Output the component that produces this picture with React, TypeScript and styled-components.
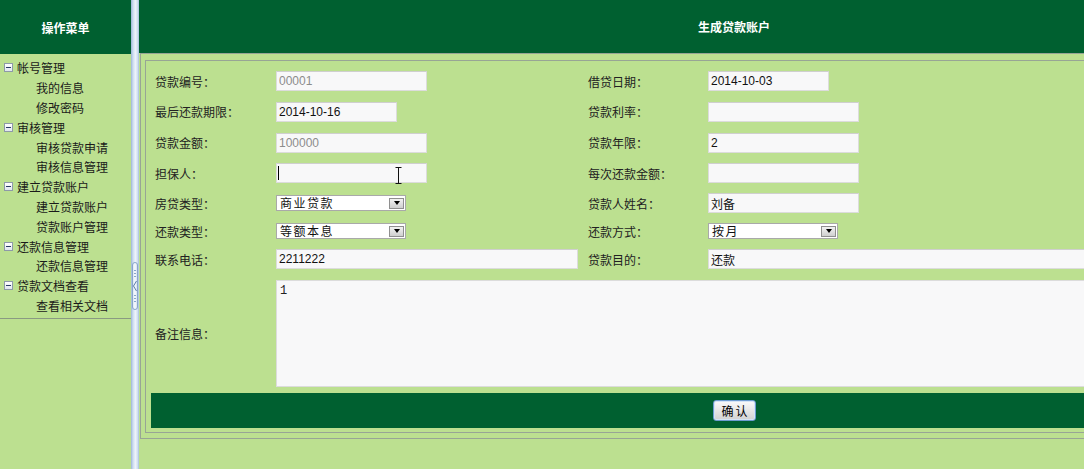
import React from "react";
import styled, { createGlobalStyle } from "styled-components";

const DARK = "#006030";
const LIGHT = "#bce090";

const GlobalStyle = createGlobalStyle`
  html, body {
    margin: 0;
    padding: 0;
    overflow: hidden;
    background: ${LIGHT};
  }
  body {
    font-family: "Noto Sans CJK SC", "Liberation Sans", sans-serif;
    font-size: 12px;
    color: #1e1e1e;
  }
`;

const Page = styled.div`
  display: flex;
  height: 100vh;
  width: max-content;
`;

const Sidebar = styled.div`
  width: 131px;
  flex-shrink: 0;
  display: flex;
  flex-direction: column;
`;

const SideHeader = styled.div`
  height: 54px;
  background: ${DARK};
  color: #fff;
  font-weight: bold;
  display: flex;
  align-items: center;
  justify-content: center;
`;

const Menu = styled.div`
  padding: 4px 0 3px;
  border-bottom: 1px solid #8a9a82;
`;

const MenuGroup = styled.div`
  height: 19.8px;
  display: flex;
  align-items: center;
  gap: 4px;
  padding-left: 4px;
  color: #1a1a1a;
`;

const MenuItem = styled.div`
  height: 19.8px;
  display: flex;
  align-items: center;
  padding-left: 36px;
  color: #1a1a1a;
`;

const ToggleBox = styled.span`
  width: 7px;
  height: 7px;
  border: 1px solid #8e9aa8;
  background: linear-gradient(#ffffff, #dfe6ee);
  display: flex;
  align-items: center;
  justify-content: center;

  &::after {
    content: "";
    width: 5px;
    height: 1px;
    background: #2c3e66;
  }
`;

const Splitter = styled.div`
  width: 8px;
  flex-shrink: 0;
  background: linear-gradient(
    to right,
    #9db6d6,
    #cddcf0 25%,
    #eef4fb 55%,
    #d3e1f2 80%,
    #a7bedc
  );
  display: flex;
  flex-direction: column;
  align-items: center;
  padding-top: 262px;
  box-sizing: border-box;
`;

const Handle = styled.div`
  width: 6px;
  height: 48px;
  box-sizing: border-box;
  border: 1px solid #8aa6ca;
  border-radius: 3px;
  background: linear-gradient(to right, #dbe6f4, #f8fbff, #d5e2f2);
  display: flex;
  align-items: center;
  justify-content: center;
`;

const Main = styled.div`
  width: 1190px;
  flex-shrink: 0;
  display: flex;
  flex-direction: column;
`;

const MainHeader = styled.div`
  height: 53px;
  background: ${DARK};
  color: #fff;
  font-weight: bold;
  display: flex;
  align-items: center;
  justify-content: center;
`;

const OuterBox = styled.div`
  margin-left: 1px;
  border: 1px solid #98a595;
  padding: 6px 4px 5px 4px;
`;

const InnerBox = styled.div`
  border: 1px solid #98a595;
  padding: 5px 5px 4px 5px;
`;

const Form = styled.div`
  display: grid;
  grid-template-columns: 125px 312px 120px 1fr;
  grid-template-rows: 30px 31px 31px 30px 30px 26px 30px 119px;
  align-items: center;
`;

const Label = styled.div<{ $indent?: boolean }>`
  padding-left: ${(p) => (p.$indent ? "4px" : "0")};
  color: #222;
  white-space: nowrap;
`;

const Field = styled.div<{ $span?: number }>`
  position: relative;
  display: flex;
  align-items: center;
  grid-column: ${(p) => (p.$span ? `span ${p.$span}` : "auto")};
`;

const TextInput = styled.input<{ $w: string; $muted?: boolean }>`
  width: ${(p) => p.$w};
  height: 20px;
  box-sizing: border-box;
  border: 1px solid #dcdcdc;
  border-top-color: #cfcfcf;
  background: #f8f8f9;
  padding: 0 2px;
  font-family: "Liberation Sans", "Noto Sans CJK SC", sans-serif;
  font-size: 12px;
  color: ${(p) => (p.$muted ? "#8c8c8c" : "#111")};
  outline: none;
`;

const CnInput = styled(TextInput)`
  font-family: "Noto Sans CJK SC", "Liberation Sans", sans-serif;
`;

const Caret = styled.span`
  position: absolute;
  left: 2px;
  top: 3px;
  width: 1px;
  height: 14px;
  background: #000;
`;

const IBeam = styled.svg`
  position: absolute;
  left: 119px;
  top: 4px;
`;

const SelectBox = styled.div<{ $w: string }>`
  width: ${(p) => p.$w};
  height: 16px;
  box-sizing: border-box;
  border: 1px solid #a9a9a9;
  background: #fff;
  display: flex;
  align-items: center;
`;

const SelectText = styled.span`
  flex: 1;
  padding-left: 3px;
  letter-spacing: 1.5px;
  color: #111;
  line-height: 14px;
`;

const ArrowButton = styled.span`
  width: 15px;
  height: 11px;
  margin-right: 1px;
  box-sizing: border-box;
  border: 1px solid #8f8f8f;
  background: linear-gradient(#f2f2f2, #cfcfcf);
  display: flex;
  align-items: center;
  justify-content: center;

  &::after {
    content: "";
    border-left: 3px solid transparent;
    border-right: 3px solid transparent;
    border-top: 4px solid #000;
  }
`;

const NoteArea = styled.textarea`
  width: 100%;
  height: 107px;
  box-sizing: border-box;
  border: 1px solid #dcdcdc;
  background: #f8f8f9;
  padding: 3px 3px;
  font-family: "Liberation Mono", monospace;
  font-size: 12px;
  color: #222;
  resize: none;
  outline: none;
`;

const ButtonBar = styled.div`
  height: 35px;
  background: ${DARK};
  display: flex;
  align-items: center;
  justify-content: center;
`;

const ConfirmButton = styled.button`
  width: 43px;
  height: 21px;
  padding: 0;
  border: 1px solid #6d9bd0;
  border-radius: 3px;
  background: linear-gradient(#fbfbfb, #e4e4e4 55%, #d2d2d2);
  box-shadow: inset 0 0 0 1px #d4e4f6;
  font-family: "Noto Sans CJK SC", sans-serif;
  font-size: 12px;
  letter-spacing: 2px;
  text-indent: 2px;
  color: #000;
`;

const Select = ({ value, w }: { value: string; w: string }) => (
  <SelectBox $w={w}>
    <SelectText>{value}</SelectText>
    <ArrowButton />
  </SelectBox>
);

const menu = [
  { title: "帐号管理", items: ["我的信息", "修改密码"] },
  { title: "审核管理", items: ["审核贷款申请", "审核信息管理"] },
  { title: "建立贷款账户", items: ["建立贷款账户", "贷款账户管理"] },
  { title: "还款信息管理", items: ["还款信息管理"] },
  { title: "贷款文档查看", items: ["查看相关文档"] },
];

export default function App() {
  return (
    <>
      <GlobalStyle />
      <Page>
        <Sidebar>
          <SideHeader>操作菜单</SideHeader>
          <Menu>
            {menu.map((g) => (
              <React.Fragment key={g.title}>
                <MenuGroup>
                  <ToggleBox />
                  {g.title}
                </MenuGroup>
                {g.items.map((it) => (
                  <MenuItem key={it}>{it}</MenuItem>
                ))}
              </React.Fragment>
            ))}
          </Menu>
        </Sidebar>

        <Splitter>
          <Handle>
            <svg width="4" height="40" viewBox="0 0 4 40">
              <g fill="#8aa6ca">
                <rect x="1" y="4" width="2" height="1" />
                <rect x="1" y="7" width="2" height="1" />
                <rect x="1" y="10" width="2" height="1" />
                <rect x="1" y="29" width="2" height="1" />
                <rect x="1" y="32" width="2" height="1" />
                <rect x="1" y="35" width="2" height="1" />
              </g>
              <path d="M3.5 15 L0.5 20 L3.5 25" fill="none" stroke="#5d7ea8" strokeWidth="1" />
            </svg>
          </Handle>
        </Splitter>

        <Main>
          <MainHeader>生成贷款账户</MainHeader>
          <OuterBox>
            <InnerBox>
              <Form>
                <Label $indent>贷款编号：</Label>
                <Field>
                  <TextInput $w="151px" $muted readOnly value="00001" />
                </Field>
                <Label>借贷日期：</Label>
                <Field>
                  <TextInput $w="121px" readOnly value="2014-10-03" />
                </Field>

                <Label $indent>最后还款期限：</Label>
                <Field>
                  <TextInput $w="121px" readOnly value="2014-10-16" />
                </Field>
                <Label>贷款利率：</Label>
                <Field>
                  <TextInput $w="151px" readOnly value="" />
                </Field>

                <Label $indent>贷款金额：</Label>
                <Field>
                  <TextInput $w="151px" $muted readOnly value="100000" />
                </Field>
                <Label>贷款年限：</Label>
                <Field>
                  <TextInput $w="151px" readOnly value="2" />
                </Field>

                <Label $indent>担保人：</Label>
                <Field>
                  <TextInput $w="151px" readOnly value="" />
                  <Caret />
                  <IBeam width="7" height="17" viewBox="0 0 7 17">
                    <path
                      d="M0.5 0.5 H6.5 M3.5 0.5 V16.5 M0.5 16.5 H6.5"
                      stroke="#111"
                      strokeWidth="1"
                      fill="none"
                    />
                  </IBeam>
                </Field>
                <Label>每次还款金额：</Label>
                <Field>
                  <TextInput $w="151px" readOnly value="" />
                </Field>

                <Label $indent>房贷类型：</Label>
                <Field>
                  <Select w="130px" value="商业贷款" />
                </Field>
                <Label>贷款人姓名：</Label>
                <Field>
                  <CnInput $w="151px" readOnly value="刘备" />
                </Field>

                <Label $indent>还款类型：</Label>
                <Field>
                  <Select w="130px" value="等额本息" />
                </Field>
                <Label>还款方式：</Label>
                <Field>
                  <Select w="130px" value="按月" />
                </Field>

                <Label $indent>联系电话：</Label>
                <Field>
                  <TextInput $w="302px" readOnly value="2211222" />
                </Field>
                <Label>贷款目的：</Label>
                <Field>
                  <CnInput $w="100%" readOnly value="还款" />
                </Field>

                <Label $indent>备注信息：</Label>
                <Field $span={3}>
                  <NoteArea readOnly value="1" />
                </Field>
              </Form>
              <ButtonBar>
                <ConfirmButton>确认</ConfirmButton>
              </ButtonBar>
            </InnerBox>
          </OuterBox>
        </Main>
      </Page>
    </>
  );
}
